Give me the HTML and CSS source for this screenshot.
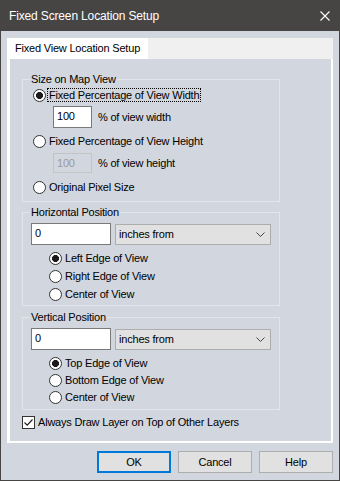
FILE: index.html
```html
<!DOCTYPE html>
<html>
<head>
<meta charset="utf-8">
<link rel="stylesheet" href="styles.css">
</head>
<body>
<div class="window">
  <div class="titlebar">
    <span class="title">Fixed Screen Location Setup</span>
    <svg class="close" width="10" height="10" viewBox="0 0 10 10"><path d="M0.5 0.5 L9.5 9.5 M9.5 0.5 L0.5 9.5" stroke="#fff" stroke-width="1.1" fill="none"/></svg>
  </div>
  <div class="content">
    <div class="tabs"><div class="tab">Fixed View Location Setup</div></div>
    <div class="panel">
      <fieldset class="group g1">
        <legend>Size on Map View</legend>
        <div class="row radio-row r0"><span class="radio checked"></span><span class="label focus">Fixed Percentage of View Width</span></div>
        <div class="row input-row r1"><div class="textbox small">100</div><span class="unit">% of view width</span></div>
        <div class="row radio-row r2"><span class="radio"></span><span class="label">Fixed Percentage of View Height</span></div>
        <div class="row input-row r3"><div class="textbox small disabled">100</div><span class="unit">% of view height</span></div>
        <div class="row radio-row r4"><span class="radio"></span><span class="label">Original Pixel Size</span></div>
      </fieldset>
      <fieldset class="group g2">
        <legend>Horizontal Position</legend>
        <div class="row pos-row"><div class="textbox wide">0</div><div class="dropdown"><span>inches from</span><svg width="9" height="5" viewBox="0 0 9 5"><path d="M0.5 0.5 L4.5 4.5 L8.5 0.5" stroke="#444" stroke-width="1" fill="none"/></svg></div></div>
        <div class="radios">
          <div class="row radio-row"><span class="radio checked"></span><span class="label">Left Edge of View</span></div>
          <div class="row radio-row"><span class="radio"></span><span class="label">Right Edge of View</span></div>
          <div class="row radio-row"><span class="radio"></span><span class="label">Center of View</span></div>
        </div>
      </fieldset>
      <fieldset class="group g3">
        <legend>Vertical Position</legend>
        <div class="row pos-row"><div class="textbox wide">0</div><div class="dropdown"><span>inches from</span><svg width="9" height="5" viewBox="0 0 9 5"><path d="M0.5 0.5 L4.5 4.5 L8.5 0.5" stroke="#444" stroke-width="1" fill="none"/></svg></div></div>
        <div class="radios tight">
          <div class="row radio-row"><span class="radio checked"></span><span class="label">Top Edge of View</span></div>
          <div class="row radio-row"><span class="radio"></span><span class="label">Bottom Edge of View</span></div>
          <div class="row radio-row"><span class="radio"></span><span class="label">Center of View</span></div>
        </div>
      </fieldset>
      <div class="row check-row"><span class="checkbox"><svg width="11" height="11" viewBox="0 0 11 11"><path d="M1.5 5.5 L4.2 8.2 L9.5 2.5" stroke="#222" stroke-width="1.2" fill="none"/></svg></span><span class="label">Always Draw Layer on Top of Other Layers</span></div>
    </div>
    <div class="buttons">
      <div class="btn default">OK</div>
      <div class="btn">Cancel</div>
      <div class="btn">Help</div>
    </div>
  </div>
</div>
</body>
</html>
```

FILE: styles.css
```css
* { box-sizing: border-box; }
html, body { margin: 0; padding: 0; }
body {
  width: 340px;
  height: 481px;
  font-family: "Liberation Sans", Arial, sans-serif;
  font-size: 11px;
  letter-spacing: -0.2px;
  color: #000;
  background: #d2d6de;
}
.window {
  width: 340px;
  height: 481px;
  border: 1px solid #474543;
  border-top: none;
  background: #d2d6de;
  display: flex;
  flex-direction: column;
}
.titlebar {
  height: 31px;
  flex: 0 0 31px;
  background: #474543;
  margin: 0 -1px;
  display: flex;
  align-items: center;
  justify-content: space-between;
  padding: 0 10px 0 9px;
}
.title {
  color: #fff;
  font-size: 12px;
  letter-spacing: -0.15px;
}
.close { display: block; }
.content {
  padding: 7px 6px 0 6px;
  display: flex;
  flex-direction: column;
}
.tabs {
  height: 21px;
  background: #f0f0f0;
  display: flex;
}
.tab {
  width: 141px;
  background: #fff;
  padding-left: 8px;
  line-height: 21px;
}
.panel {
  height: 384px;
  border: 2px solid #fff;
  border-top: none;
  border-left-width: 3px;
  background: #d2d6de;
  padding: 14px 0 0 12px;
  display: flex;
  flex-direction: column;
}
.group {
  width: 258px;
  margin: 0;
  padding: 0 0 0 8px;
  border: 1px solid #e2e5eb;
}
.group legend {
  margin-left: -1px;
  padding: 0 1px;
  line-height: 13px;
}
.g1 { padding: 0 0 6px 10px; }
.g1 legend { margin-left: -3px; }
.row {
  display: flex;
  align-items: center;
}
.radio-row { height: 16px; }
.radio {
  width: 13px;
  height: 13px;
  border: 1px solid #333;
  border-radius: 50%;
  background: #fff;
  margin-right: 2px;
  flex: 0 0 13px;
}
.radio.checked {
  background: radial-gradient(circle, #1b1b1b 0 3.2px, #fff 3.8px);
}
.label { padding: 0 1px; line-height: 12px; }
.focus { outline: 1px dotted #000; outline-offset: 0; }
.r0 { margin-top: 1px; }
.input-row { padding-left: 20px; }
.r1 { margin-top: 3px; }
.r2 { margin-top: 5px; }
.r3 { margin-top: 4px; }
.r4 { margin-top: 6px; }
.textbox {
  height: 22px;
  border: 1px solid #7a7a7a;
  background: #fff;
  padding: 2px 0 0 3px;
  line-height: 14px;
}
.textbox.small { width: 39px; }
.textbox.disabled {
  height: 20px;
  border-color: #c4c4c4;
  background: #d2d6de;
  color: #9a9a9a;
}
.unit { margin-left: 6px; }
.g2 { margin-top: 4px; }
.g3 { margin-top: 5px; }
.pos-row { margin-top: 4px; }
.textbox.wide { width: 80px; }
.dropdown {
  width: 156px;
  height: 21px;
  margin-left: 4px;
  background: #e1e1e1;
  border: 1px solid #adadad;
  display: flex;
  align-items: center;
  justify-content: space-between;
  padding: 0 5px 0 3px;
}
.dropdown svg { display: block; }
.radios {
  padding-left: 18px;
  margin-top: 5px;
  margin-bottom: 3px;
  display: flex;
  flex-direction: column;
  gap: 2px;
}
.radios.tight { gap: 1px; margin-bottom: 4px; }
.check-row { margin-top: 4px; height: 16px; }
.checkbox {
  width: 13px;
  height: 13px;
  border: 1px solid #333;
  background: #fff;
  margin-right: 2px;
  display: flex;
  align-items: center;
  justify-content: center;
}
.checkbox svg { display: block; }
.buttons {
  display: flex;
  justify-content: flex-end;
  gap: 7px;
  margin-top: 8px;
}
.btn {
  width: 74px;
  height: 22px;
  background: #e1e1e1;
  border: 1px solid #adadad;
  display: flex;
  align-items: center;
  justify-content: center;
}
.btn.default { border: 2px solid #0078d7; }
```
